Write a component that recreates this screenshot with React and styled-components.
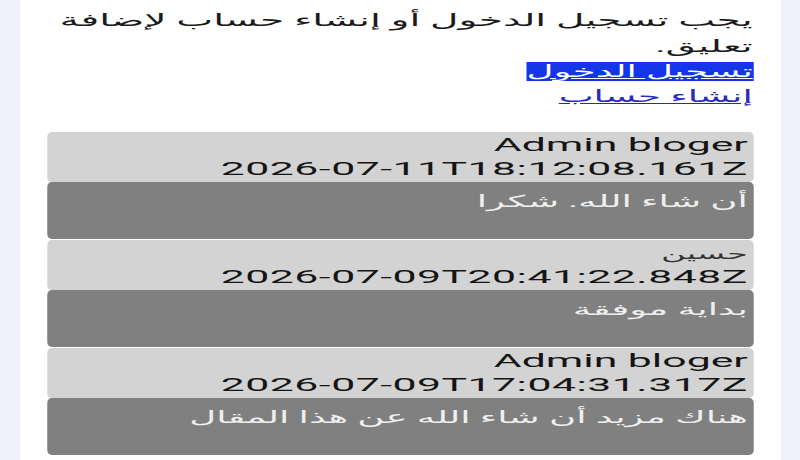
import React from "react";
import styled, { createGlobalStyle } from "styled-components";

const SCALE = 2.25;

const GlobalStyle = createGlobalStyle`
  html, body {
    margin: 0;
    padding: 0;
    background: #eef0fb;
    overflow: hidden;
  }
`;

const Stage = styled.div`
  width: ${800 / SCALE}px;
  transform: scaleX(${SCALE});
  transform-origin: 0 0;
`;

const Panel = styled.main`
  margin: 0 9px;
  min-height: 460px;
  box-sizing: border-box;
  padding: 7px 12px 0 11.5px;
  background: #ffffff;
  direction: rtl;
  font-family: Roboto, "DejaVu Sans", sans-serif;
  color: #1b1b1b;
`;

const Notice = styled.p`
  margin: 0;
  font-size: 17.4px;
  line-height: 26px;
`;

const LinkLine = styled.div`
  font-size: 16.5px;
  line-height: 25px;
`;

const AuthLink = styled.a`
  color: ${(p) => (p.$selected ? "#ffffff" : "#2a2ab8")};
  background: ${(p) => (p.$selected ? "#1436e6" : "transparent")};
  text-decoration: underline;
`;

const CommentList = styled.section`
  margin-top: 23px;
  display: flex;
  flex-direction: column;
  gap: 1px;
`;

const Card = styled.article`
  display: flex;
  flex-direction: column;
`;

const CardHead = styled.header`
  height: 50px;
  box-sizing: border-box;
  padding: 1px 2.2px 0;
  background: #d3d3d3;
  border-radius: 2px / 5px;
  line-height: 24px;
  color: #151515;
`;

const Author = styled.div`
  white-space: nowrap;
  font-size: ${(p) => (p.$arabic ? "15px" : "19px")};
  padding-top: ${(p) => (p.$arabic ? "3px" : "0")};
  line-height: ${(p) => (p.$arabic ? "21px" : "24px")};
  color: ${(p) => (p.$arabic ? "#333" : "#151515")};
`;

const Stamp = styled.div`
  white-space: nowrap;
  direction: ltr;
  text-align: right;
  font-size: 19px;
  letter-spacing: 0.22px;
`;

const CardBody = styled.div`
  height: 57px;
  box-sizing: border-box;
  padding: 9px 2.2px 0;
  background: #808080;
  border-radius: 2px / 5px;
  font-size: 16.5px;
  line-height: 22px;
  color: #efefef;
`;

const comments = [
  {
    author: "Admin bloger",
    date: "2026-07-11T18:12:08.161Z",
    text: "أن شاء الله. شكرا",
  },
  {
    author: "حسين",
    date: "2026-07-09T20:41:22.848Z",
    text: "بداية موفقة",
  },
  {
    author: "Admin bloger",
    date: "2026-07-09T17:04:31.317Z",
    text: "هناك مزيد أن شاء الله عن هذا المقال",
  },
];

const isArabic = (s) => /[\u0600-\u06FF]/.test(s);

const App = () => {
  return (
    <>
      <GlobalStyle />
      <Stage>
        <Panel>
          <Notice>يجب تسجيل الدخول أو إنشاء حساب لإضافة تعليق.</Notice>
          <LinkLine>
            <AuthLink href="#" $selected>
              تسجيل الدخول
            </AuthLink>
          </LinkLine>
          <LinkLine>
            <AuthLink href="#">إنشاء حساب</AuthLink>
          </LinkLine>
          <CommentList>
            {comments.map((c, i) => (
              <Card key={i}>
                <CardHead>
                  <Author $arabic={isArabic(c.author)}>{c.author}</Author>
                  <Stamp>{c.date}</Stamp>
                </CardHead>
                <CardBody>{c.text}</CardBody>
              </Card>
            ))}
          </CommentList>
        </Panel>
      </Stage>
    </>
  );
};

export default App;
